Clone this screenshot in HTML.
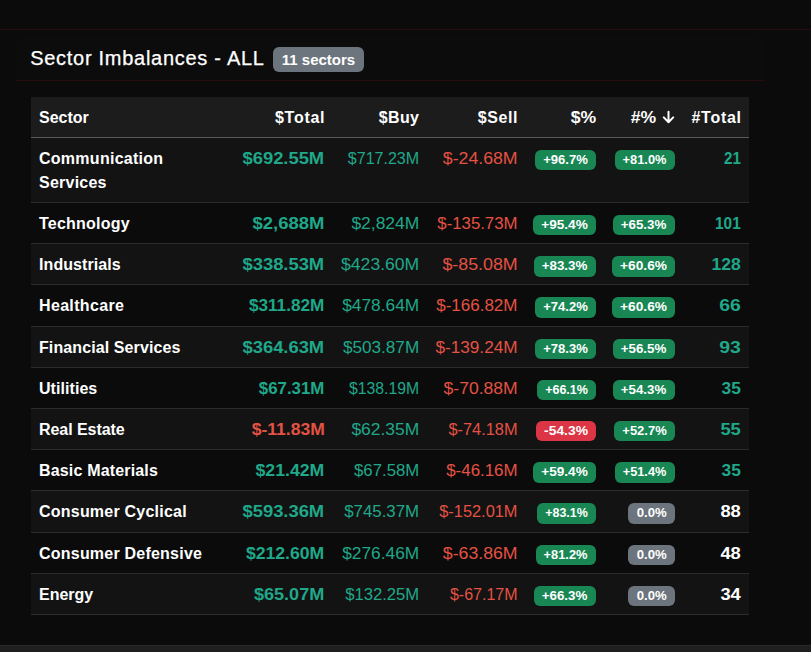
<!DOCTYPE html>
<html><head><meta charset="utf-8"><style>
html,body{margin:0;padding:0;}
body{width:811px;height:652px;overflow:hidden;background:#0b0b0b;font-family:"Liberation Sans",sans-serif;color:#fff;position:relative;}
.topline{position:absolute;left:0;top:29px;width:811px;height:1px;background:#270d0d;}
.card-h{position:absolute;left:15px;top:38px;width:750px;height:42px;border-bottom:1px solid #270d0d;background:#0c0c0c;border-radius:6px 6px 0 0;}
.title{position:absolute;left:15.2px;top:8px;font-size:20px;line-height:24px;letter-spacing:0.72px;color:#fff;-webkit-text-stroke:0.25px #fff;}
.hbadge{position:absolute;left:258px;top:9px;width:91px;height:25px;border-radius:6px;background:#6c757d;color:#fff;font-weight:bold;font-size:15px;line-height:25px;text-align:center;}
table{position:absolute;left:31px;top:97px;width:718px;border-collapse:collapse;table-layout:fixed;font-size:16px;line-height:24px;}
th,td{padding:8px;text-align:right;vertical-align:top;white-space:nowrap;}
th{background:#1c1c1c;font-weight:bold;border-bottom:1px solid #5a5a5a;padding-top:8.5px;padding-bottom:7.5px;}
td{border-bottom:1px solid #2c2c2c;padding-top:9px;padding-bottom:7px;}
tbody tr{height:41.2px;}
th.c1,td.c1{text-align:left;}
td.c1{font-weight:bold;}
tr.odd td{background:#131313;}
td.c2,th.c2{padding-right:7.5px;}
td.c3,th.c3{padding-right:8px;}
td.c4,th.c4{padding-right:7.5px;}
td.c5,td.c6{padding-right:8px;}
th.c5{padding-right:8px;}
th.c6{padding-right:8px;}
td.c7{padding-right:8px;}
th.c7{padding-right:8px;}
td.c2{font-weight:bold;}
.g{color:#1fa88a;}
.r{color:#e45243;}
td.c3{color:#1fa88a;}
td.c4{color:#e45243;}
td.c7{font-weight:bold;}
.t{color:#1fa88a;}
.w{color:#fff;}
.bd{display:inline-block;box-sizing:border-box;height:20.4px;vertical-align:top;margin-top:3px;font-size:12px;line-height:20.4px;font-weight:bold;text-align:center;border-radius:6px;color:#fff;}
.bg{background:#198754;}
.br{background:#dc3545;}
.bs{background:#6c757d;}
.sx{display:inline-block;transform-origin:100% 50%;}
.sx2{display:inline-block;transform-origin:50% 50%;}
.arr{vertical-align:top;margin-top:4.5px;margin-left:5.5px;}
.bottom{position:absolute;left:0;top:645px;width:811px;height:7px;background:#1f1f1f;border-top:1px solid #2a2a2a;}

</style></head><body>
<div class="topline"></div>
<div class="card-h"><span class="title">Sector Imbalances - ALL</span><span class="hbadge">11 sectors</span></div>
<table>
<colgroup><col style="width:199px"><col style="width:102px"><col style="width:95px"><col style="width:98px"><col style="width:79px"><col style="width:79px"><col style="width:66px"></colgroup>
<thead><tr><th class="c1">Sector</th><th class="c2"><span style="letter-spacing:0.72px;margin-right:-0.72px;">$Total</span></th><th class="c3"><span style="letter-spacing:0.4px;margin-right:-0.4px;">$Buy</span></th><th class="c4"><span style="letter-spacing:0.6px;margin-right:-0.6px;">$Sell</span></th><th class="c5"><span class="sx" style="transform:scaleX(1.1)">$%</span></th><th class="c6"><span class="sx" style="transform:scaleX(1.1)">#%</span><svg class="arr" width="13" height="14" viewBox="0 0 13 14"><path d="M6.5 1.8V12.2M1.8 7.4L6.5 12.2L11.2 7.4" fill="none" stroke="#fff" stroke-width="2" stroke-linecap="round" stroke-linejoin="round"/></svg></th><th class="c7"><span style="letter-spacing:0.72px;margin-right:-0.72px;">#Total</span></th></tr></thead>
<tbody>
<tr class="odd"><td class="c1"><span style="letter-spacing:0.27px;">Communication</span><br><span style="letter-spacing:0.24px;">Services</span></td><td class="c2 g"><span class="sx" style="transform:scaleX(1.1471)">$692.55M</span></td><td class="c3"><span class="sx" style="transform:scaleX(1.0029)">$717.23M</span></td><td class="c4"><span class="sx" style="transform:scaleX(1.1061)">$-24.68M</span></td><td class="c5"><span class="bd bg" style="width:61.2px"><span class="sx2" style="transform:scaleX(1.0889)">+96.7%</span></span></td><td class="c6"><span class="bd bg" style="width:60.4px"><span class="sx2" style="transform:scaleX(1.0691)">+81.0%</span></span></td><td class="c7 t"><span class="sx" style="transform:scaleX(0.9444)">21</span></td></tr>
<tr class="even"><td class="c1"><span style="letter-spacing:0.22px;">Technology</span></td><td class="c2 g"><span class="sx" style="transform:scaleX(1.1525)">$2,688M</span></td><td class="c3"><span class="sx" style="transform:scaleX(1.0902)">$2,824M</span></td><td class="c4"><span class="sx" style="transform:scaleX(1.048)">$-135.73M</span></td><td class="c5"><span class="bd bg" style="width:63px"><span class="sx2" style="transform:scaleX(1.1333)">+95.4%</span></span></td><td class="c6"><span class="bd bg" style="width:62.2px"><span class="sx2" style="transform:scaleX(1.1136)">+65.3%</span></span></td><td class="c7 t"><span class="sx" style="transform:scaleX(0.9615)">101</span></td></tr>
<tr class="odd"><td class="c1"><span style="letter-spacing:0.08px;">Industrials</span></td><td class="c2 g"><span class="sx" style="transform:scaleX(1.1471)">$338.53M</span></td><td class="c3"><span class="sx" style="transform:scaleX(1.0971)">$423.60M</span></td><td class="c4"><span class="sx" style="transform:scaleX(1.1121)">$-85.08M</span></td><td class="c5"><span class="bd bg" style="width:62.2px"><span class="sx2" style="transform:scaleX(1.1136)">+83.3%</span></span></td><td class="c6"><span class="bd bg" style="width:63.3px"><span class="sx2" style="transform:scaleX(1.1407)">+60.6%</span></span></td><td class="c7 t"><span class="sx" style="transform:scaleX(1.096)">128</span></td></tr>
<tr class="even"><td class="c1"><span style="letter-spacing:0.34px;">Healthcare</span></td><td class="c2 g"><span class="sx" style="transform:scaleX(1.0725)">$311.82M</span></td><td class="c3"><span class="sx" style="transform:scaleX(1.0814)">$478.64M</span></td><td class="c4"><span class="sx" style="transform:scaleX(1.0627)">$-166.82M</span></td><td class="c5"><span class="bd bg" style="width:61.2px"><span class="sx2" style="transform:scaleX(1.0889)">+74.2%</span></span></td><td class="c6"><span class="bd bg" style="width:63.3px"><span class="sx2" style="transform:scaleX(1.1407)">+60.6%</span></span></td><td class="c7 t"><span class="sx" style="transform:scaleX(1.2118)">66</span></td></tr>
<tr class="odd"><td class="c1"><span style="letter-spacing:0.1px;">Financial Services</span></td><td class="c2 g"><span class="sx" style="transform:scaleX(1.1471)">$364.63M</span></td><td class="c3"><span class="sx" style="transform:scaleX(1.0714)">$503.87M</span></td><td class="c4"><span class="sx" style="transform:scaleX(1.072)">$-139.24M</span></td><td class="c5"><span class="bd bg" style="width:61.2px"><span class="sx2" style="transform:scaleX(1.0889)">+78.3%</span></span></td><td class="c6"><span class="bd bg" style="width:62.2px"><span class="sx2" style="transform:scaleX(1.1136)">+56.5%</span></span></td><td class="c7 t"><span class="sx" style="transform:scaleX(1.2118)">93</span></td></tr>
<tr class="even"><td class="c1"><span style="letter-spacing:0.06px;">Utilities</span></td><td class="c2 g"><span class="sx" style="transform:scaleX(1.0508)">$67.31M</span></td><td class="c3"><span class="sx" style="transform:scaleX(0.9857)">$138.19M</span></td><td class="c4"><span class="sx" style="transform:scaleX(1.0955)">$-70.88M</span></td><td class="c5"><span class="bd bg" style="width:59.2px"><span class="sx2" style="transform:scaleX(1.0395)">+66.1%</span></span></td><td class="c6"><span class="bd bg" style="width:62px"><span class="sx2" style="transform:scaleX(1.1086)">+54.3%</span></span></td><td class="c7 t"><span class="sx" style="transform:scaleX(1.0833)">35</span></td></tr>
<tr class="odd"><td class="c1"><span style="letter-spacing:-0.05px;">Real Estate</span></td><td class="c2 r"><span class="sx" style="transform:scaleX(1.0938)">$-11.83M</span></td><td class="c3"><span class="sx" style="transform:scaleX(1.0902)">$62.35M</span></td><td class="c4"><span class="sx" style="transform:scaleX(1.0227)">$-74.18M</span></td><td class="c5"><span class="bd br" style="width:60.4px"><span class="sx2" style="transform:scaleX(1.1547)">-54.3%</span></span></td><td class="c6"><span class="bd bg" style="width:60.9px"><span class="sx2" style="transform:scaleX(1.0815)">+52.7%</span></span></td><td class="c7 t"><span class="sx" style="transform:scaleX(1.1471)">55</span></td></tr>
<tr class="even"><td class="c1"><span style="letter-spacing:0.17px;">Basic Materials</span></td><td class="c2 g"><span class="sx" style="transform:scaleX(1.1049)">$21.42M</span></td><td class="c3"><span class="sx" style="transform:scaleX(1.0475)">$67.58M</span></td><td class="c4"><span class="sx" style="transform:scaleX(1.0561)">$-46.16M</span></td><td class="c5"><span class="bd bg" style="width:62.9px"><span class="sx2" style="transform:scaleX(1.1309)">+59.4%</span></span></td><td class="c6"><span class="bd bg" style="width:60.1px"><span class="sx2" style="transform:scaleX(1.0617)">+51.4%</span></span></td><td class="c7 t"><span class="sx" style="transform:scaleX(1.0833)">35</span></td></tr>
<tr class="odd"><td class="c1"><span style="letter-spacing:0.22px;">Consumer Cyclical</span></td><td class="c2 g"><span class="sx" style="transform:scaleX(1.1471)">$593.36M</span></td><td class="c3"><span class="sx" style="transform:scaleX(1.0543)">$745.37M</span></td><td class="c4"><span class="sx" style="transform:scaleX(1.0227)">$-152.01M</span></td><td class="c5"><span class="bd bg" style="width:59.2px"><span class="sx2" style="transform:scaleX(1.0395)">+83.1%</span></span></td><td class="c6"><span class="bd bs" style="width:47.2px"><span class="sx2" style="transform:scaleX(1.0945)">0.0%</span></span></td><td class="c7 w"><span class="sx" style="transform:scaleX(1.1444)">88</span></td></tr>
<tr class="even"><td class="c1"><span style="letter-spacing:0.22px;">Consumer Defensive</span></td><td class="c2 g"><span class="sx" style="transform:scaleX(1.1)">$212.60M</span></td><td class="c3"><span class="sx" style="transform:scaleX(1.0814)">$276.46M</span></td><td class="c4"><span class="sx" style="transform:scaleX(1.1061)">$-63.86M</span></td><td class="c5"><span class="bd bg" style="width:60.4px"><span class="sx2" style="transform:scaleX(1.0691)">+81.2%</span></span></td><td class="c6"><span class="bd bs" style="width:47.2px"><span class="sx2" style="transform:scaleX(1.0945)">0.0%</span></span></td><td class="c7 w"><span class="sx" style="transform:scaleX(1.1444)">48</span></td></tr>
<tr class="odd"><td class="c1"><span style="letter-spacing:0.0px;">Energy</span></td><td class="c2 g"><span class="sx" style="transform:scaleX(1.1295)">$65.07M</span></td><td class="c3"><span class="sx" style="transform:scaleX(1.04)">$132.25M</span></td><td class="c4"><span class="sx" style="transform:scaleX(1.0)">$-67.17M</span></td><td class="c5"><span class="bd bg" style="width:62.2px"><span class="sx2" style="transform:scaleX(1.1136)">+66.3%</span></span></td><td class="c6"><span class="bd bs" style="width:47.2px"><span class="sx2" style="transform:scaleX(1.0945)">0.0%</span></span></td><td class="c7 w"><span class="sx" style="transform:scaleX(1.1444)">34</span></td></tr>
</tbody></table>
<div class="bottom"></div>
</body></html>
